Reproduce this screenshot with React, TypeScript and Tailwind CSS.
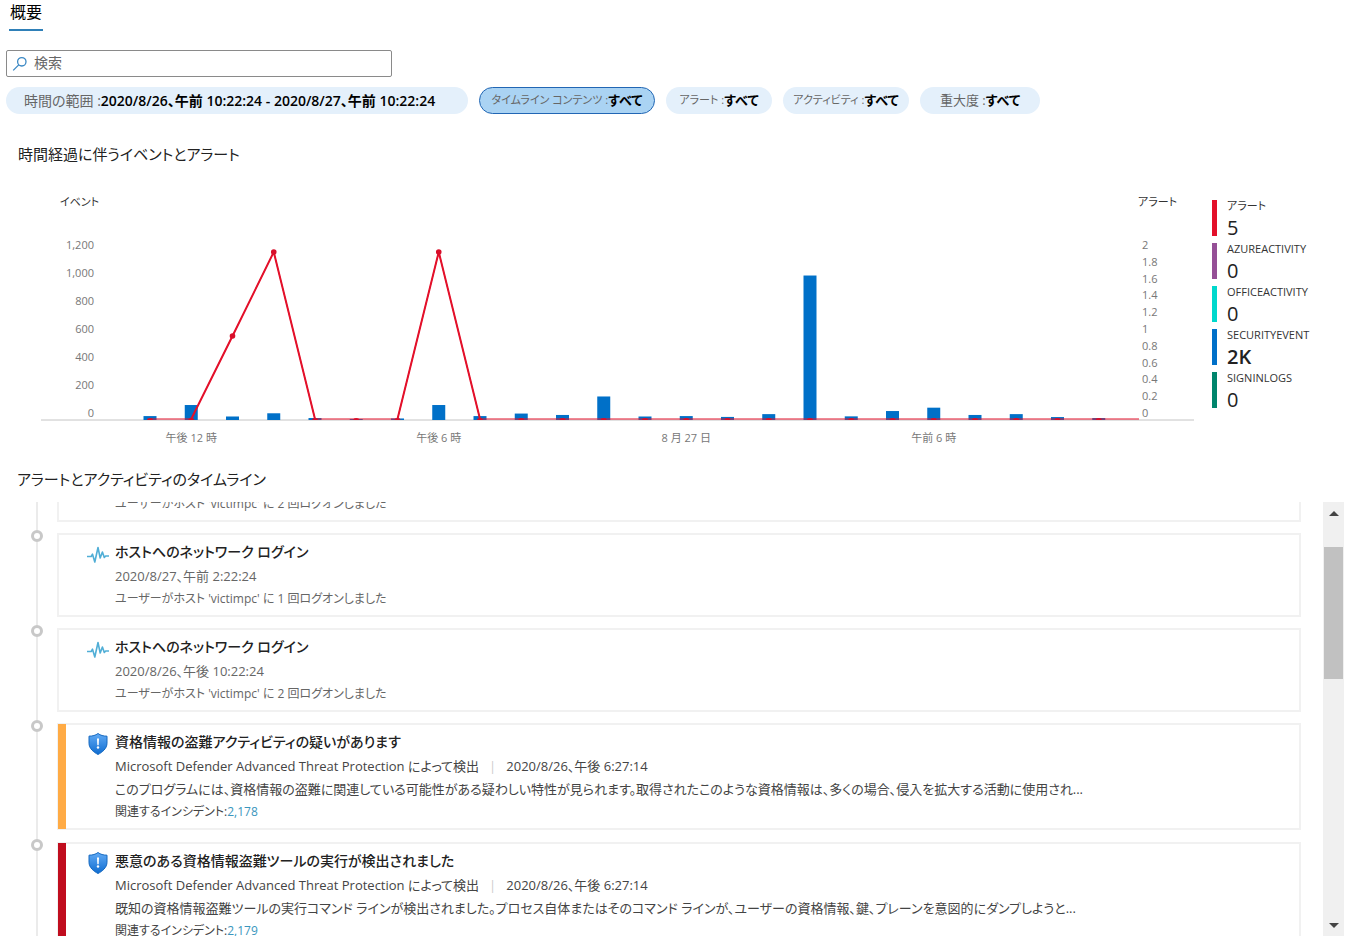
import * as React from "react"
import clsx from "clsx"

type Filter = { label: string; value: string; className: string; labelClass: string; selected?: boolean }

type Entry = {
  id: number
  kind: "activity" | "alert"
  title?: string
  time?: string
  body: string
  incident?: string
  severityClass?: string
}

const filters: Filter[] = [
  {
    label: "時間の範囲 :",
    value: "2020/8/26、午前 10:22:24 - 2020/8/27、午前 10:22:24",
    className: "w-[462px] pl-[18px] pr-7 text-sm",
    labelClass: "text-sm",
  },
  { label: "タイムライン コンテンツ :", value: "すべて", className: "w-[176px] justify-center text-[13px]", labelClass: "text-[11px]", selected: true },
  { label: "アラート :", value: "すべて", className: "w-[106px] justify-center text-[13px]", labelClass: "text-[11px]" },
  { label: "アクティビティ :", value: "すべて", className: "w-[126px] justify-center text-[13px]", labelClass: "text-[11px]" },
  { label: "重大度 :", value: "すべて", className: "w-[120px] justify-center text-[13px]", labelClass: "text-[13px]" },
]

const legend = [
  { name: "アラート", value: "5", color: "bg-[#e3102a]" },
  { name: "AZUREACTIVITY", value: "0", color: "bg-[#954f96]" },
  { name: "OFFICEACTIVITY", value: "0", color: "bg-[#00d8cc]" },
  { name: "SECURITYEVENT", value: "2K", color: "bg-[#0070c8]", active: true },
  { name: "SIGNINLOGS", value: "0", color: "bg-[#00856c]" },
]

const entries: Entry[] = [
  { id: 1, kind: "activity", body: "ユーザーがホスト 'victimpc' に 2 回ログオンしました" },
  { id: 2, kind: "activity", title: "ホストへのネットワーク ログイン", time: "2020/8/27、午前 2:22:24", body: "ユーザーがホスト 'victimpc' に 1 回ログオンしました" },
  { id: 3, kind: "activity", title: "ホストへのネットワーク ログイン", time: "2020/8/26、午後 10:22:24", body: "ユーザーがホスト 'victimpc' に 2 回ログオンしました" },
  {
    id: 4,
    kind: "alert",
    title: "資格情報の盗難アクティビティの疑いがあります",
    time: "2020/8/26、午後 6:27:14",
    body: "このプログラムには、資格情報の盗難に関連している可能性がある疑わしい特性が見られます。取得されたこのような資格情報は、多くの場合、侵入を拡大する活動に使用され...",
    incident: "2,178",
    severityClass: "bg-[#ffab45]",
  },
  {
    id: 5,
    kind: "alert",
    title: "悪意のある資格情報盗難ツールの実行が検出されました",
    time: "2020/8/26、午後 6:27:14",
    body: "既知の資格情報盗難ツールの実行コマンド ラインが検出されました。プロセス自体またはそのコマンド ラインが、ユーザーの資格情報、鍵、プレーンを意図的にダンプしようと...",
    incident: "2,179",
    severityClass: "bg-[#c00d1e]",
  },
]

// hourly buckets, starting at 11:00
const events = [28, 107, 25, 48, 14, 7, 11, 107, 28, 46, 36, 168, 25, 28, 22, 42, 1032, 26, 64, 88, 36, 42, 21, 14]
const alerts = [0, 0, 1, 2, 0, 0, 0, 2, 0, 0, 0, 0, 0, 0, 0, 0, 0, 0, 0, 0, 0, 0, 0, 0]
const eventTicks = ["0", "200", "400", "600", "800", "1,000", "1,200"]
const alertTicks = ["0", "0.2", "0.4", "0.6", "0.8", "1", "1.2", "1.4", "1.6", "1.8", "2"]
const timeTicks = [
  { index: 1, label: "午後 12 時" },
  { index: 7, label: "午後 6 時" },
  { index: 13, label: "8 月 27 日" },
  { index: 19, label: "午前 6 時" },
]

const BASE = 232
const PLOT = 168
const bucketX = (i: number) => 150 + i * 41.25
const eventY = (v: number) => BASE - (v / 1200) * PLOT
const alertY = (v: number) => (v === 0 ? BASE - 1 : BASE - (v / 2) * PLOT)

function EventsChart() {
  const points = alerts.map((v, i) => `${bucketX(i)},${alertY(v)}`)

  return (
    <svg viewBox="0 0 1204 262" className="w-full h-auto" role="img" aria-label="時間経過に伴うイベントとアラート">
      <g fontSize="11" fill="#333">
        <text x="60" y="18">イベント</text>
        <text x="1138" y="18">アラート</text>
      </g>
      <g fontSize="11" fill="#777">
        {eventTicks.map((tick, i) => (
          <text key={tick} x="94" y={BASE - 3 - i * 28} textAnchor="end">{tick}</text>
        ))}
        {alertTicks.map((tick, i) => (
          <text key={tick} x="1142" y={BASE - 3 - i * 16.8}>{tick}</text>
        ))}
        {timeTicks.map((tick) => (
          <text key={tick.label} x={bucketX(tick.index)} y="254" textAnchor="middle">{tick.label}</text>
        ))}
      </g>
      <line x1="41" x2="1194" y1={BASE} y2={BASE} stroke="#c4c4c4" />
      {events.map((v, i) => (
        <rect key={i} x={bucketX(i) - 6.5} y={eventY(v)} width="13" height={BASE - eventY(v)} fill="#0070c8" />
      ))}
      <g fill="none" stroke="#e3102a" strokeLinejoin="round">
        <polyline points={[...points, `1139,${BASE - 1}`].join(" ")} strokeWidth="1" />
        <polyline points={points.slice(1, 5).join(" ")} strokeWidth="2" />
        <polyline points={points.slice(6, 9).join(" ")} strokeWidth="2" />
      </g>
      {alerts.map((v, i) =>
        v > 0 ? (
          <circle key={i} cx={bucketX(i)} cy={alertY(v)} r="2.8" fill="#d80f2a" />
        ) : (
          <path key={i} d={`M${bucketX(i) - 3} ${BASE}a3 2 0 0 1 6 0z`} fill="#d80f2a" />
        )
      )}
    </svg>
  )
}

function SearchIcon() {
  return (
    <svg viewBox="0 0 16 16" className="size-4 shrink-0" fill="none" stroke="#3a88c4" strokeWidth="1.3" aria-hidden="true">
      <circle cx="9.8" cy="5.8" r="4.2" />
      <path d="M6.7 8.9 1.2 14.4" />
    </svg>
  )
}

function ActivityIcon() {
  return (
    <svg viewBox="0 0 22 18" className="w-[22px] h-[18px]" fill="none" stroke="#50aed6" strokeWidth="1.6" strokeLinejoin="round" aria-hidden="true">
      <path d="M0 10.500h4.200l1.300-2.300L7.800 16l3.200-14.500 2.200 10.500 2.200-6 1.900 5.500 1.300-1.500H22" />
    </svg>
  )
}

function ShieldIcon() {
  return (
    <svg viewBox="0 0 20 22" className="w-5 h-[22px]" aria-hidden="true">
      <defs>
        <linearGradient id="shield" x1="0" y1="0" x2="0" y2="1">
          <stop offset="0" stopColor="#62abf5" />
          <stop offset="1" stopColor="#0f6cd0" />
        </linearGradient>
      </defs>
      <path d="M10 .5c2.400 1.900 5.400 2.600 9 2.700v7c0 5.300-4.600 9-9 11.300C5.600 19.200 1 15.500 1 10.200v-7C4.600 3.100 7.600 2.400 10 .5z" fill="url(#shield)" stroke="#1468c0" strokeWidth="1" />
      <path d="M9 5.500h2l-.3 6.700H9.300z" fill="#fff" />
      <circle cx="10" cy="14.500" r="1.200" fill="#fff" />
    </svg>
  )
}

function TimelineEntry({ entry }: { entry: Entry }) {
  const isAlert = entry.kind === "alert"

  return (
    <li className="flex">
      <div className="flex w-[57px] shrink-0 flex-col items-center pl-[17px]">
        <span className="size-3 rounded-full border-[3px] border-[#c8c8c8]" />
        <span className="w-0.5 flex-1 bg-[#ebebeb]" />
      </div>
      <article className={clsx("mt-[3px] flex min-w-0 flex-1 border-2 border-[#f1f1f1]", isAlert ? "mb-[9px]" : "mb-2")}>
        <div className={clsx("w-2 shrink-0 -my-px -ml-px", entry.severityClass)} />
        <div className={clsx("flex w-[49px] shrink-0 justify-end pr-1.5", isAlert ? "pt-2" : "pt-[11px]")}>
          {entry.title && (
            <div className="flex w-[22px] justify-center">{isAlert ? <ShieldIcon /> : <ActivityIcon />}</div>
          )}
        </div>
        <div className={clsx("min-w-0 flex-1 py-[5px] text-xs", isAlert ? "text-[#444]" : "text-[#666]")}>
          {entry.title && <h3 className="text-sm leading-6 font-medium text-[#222]">{entry.title}</h3>}
          {entry.time && (
            <p className="text-[13px] leading-6">
              {isAlert && (
                <>
                  Microsoft Defender Advanced Threat Protection によって検出
                  <span className="mx-2.5 text-[#ccc]">|</span>
                </>
              )}
              {entry.time}
            </p>
          )}
          <p className={clsx("truncate leading-[22px]", isAlert && "text-[13px]")}>{entry.body}</p>
          {entry.incident && (
            <p className="leading-[23px]">
              関連するインシデント:
              <a href="#incident" className="text-[#3a96bd]">{entry.incident}</a>
            </p>
          )}
        </div>
      </article>
    </li>
  )
}

export default function App() {
  const [query, setQuery] = React.useState("")
  const listRef = React.useRef<HTMLUListElement>(null)

  React.useLayoutEffect(() => {
    if (listRef.current) listRef.current.scrollTop = 19
  }, [])

  const scrollBy = (amount: number) => listRef.current?.scrollBy({ top: amount })

  return (
    <div className="flex h-screen min-h-[700px] flex-col overflow-hidden bg-white font-['Open_Sans','Noto_Sans_CJK_JP',sans-serif] [font-feature-settings:'palt'] text-[#222]">
      {/* Tabs */}
      <nav className="flex px-[9px]">
        <a href="#overview" className="border-b-2 border-[#2f80b8] px-px pb-[5px] text-base leading-6 text-black">概要</a>
      </nav>

      {/* Search and filters */}
      <div className="mt-[19px] px-1.5">
        <label className="flex h-[27px] w-[386px] items-center gap-1.5 rounded-[2px] border border-[#8a8a8a] px-[5px]">
          <SearchIcon />
          <input
            aria-label="検索"
            placeholder="検索"
            value={query}
            onChange={(e) => setQuery(e.target.value)}
            className="min-w-0 flex-1 pb-0.5 text-sm leading-5 text-[#333] outline-none placeholder:text-[#666]"
          />
        </label>
        <div className="mt-2.5 flex gap-[11px]">
          {filters.map((filter) => (
            <button
              key={filter.label}
              type="button"
              className={clsx(
                "flex h-[27px] items-center rounded-full whitespace-nowrap",
                filter.className,
                filter.selected ? "border border-[#2166b4] bg-[#aad3f3]" : "bg-[#e4f0fb]"
              )}
            >
              <span className={clsx("text-[#666]", filter.labelClass)}>{filter.label}</span>
              <span className="font-semibold text-black">{filter.value}</span>
            </button>
          ))}
        </div>
      </div>

      {/* Chart */}
      <h2 className="mt-[27px] px-[18px] text-[15px] leading-[26px]">時間経過に伴うイベントとアラート</h2>
      <section className="mt-[21px] flex">
        <div className="min-w-0 flex-1">
          <EventsChart />
        </div>
        <ul className="mt-3 flex w-[148px] shrink-0 flex-col gap-[7px] pl-2">
          {legend.map((item) => (
            <li key={item.name} className="flex h-9 gap-2.5">
              <span className={clsx("w-[5px]", item.color)} />
              <div className="flex flex-col">
                <span className="text-[11px] leading-3 text-[#333]">{item.name}</span>
                <span className={clsx("pt-1 text-xl leading-6", item.active ? "font-semibold" : "font-medium")}>{item.value}</span>
              </div>
            </li>
          ))}
        </ul>
      </section>

      {/* Timeline */}
      <h2 className="mt-4 px-[17px] text-[15px] leading-[26px]">アラートとアクティビティのタイムライン</h2>
      <section className="mt-2.5 flex min-h-0 flex-1 pr-2">
        <ul ref={listRef} className="min-w-0 flex-1 overflow-y-auto pr-[22px] [scrollbar-width:none]">
          {entries.map((entry) => (
            <TimelineEntry key={entry.id} entry={entry} />
          ))}
        </ul>
        <div className="flex w-[21px] flex-col items-center bg-[#f0f0f0]">
          <button type="button" aria-label="上へスクロール" onClick={() => scrollBy(-40)} className="flex h-[22px] w-full items-center justify-center">
            <svg viewBox="0 0 10 5" className="h-[5px] w-2.5" fill="#444" aria-hidden="true"><path d="M0 5 5 0l5 5z" /></svg>
          </button>
          <div className="flex w-full flex-1 flex-col px-px pt-[23px]">
            <div className="h-[36%] bg-[#c1c1c1]" />
          </div>
          <button type="button" aria-label="下へスクロール" onClick={() => scrollBy(40)} className="flex h-[22px] w-full items-center justify-center">
            <svg viewBox="0 0 10 5" className="h-[5px] w-2.5" fill="#444" aria-hidden="true"><path d="M0 0l5 5 5-5z" /></svg>
          </button>
        </div>
      </section>
    </div>
  )
}
